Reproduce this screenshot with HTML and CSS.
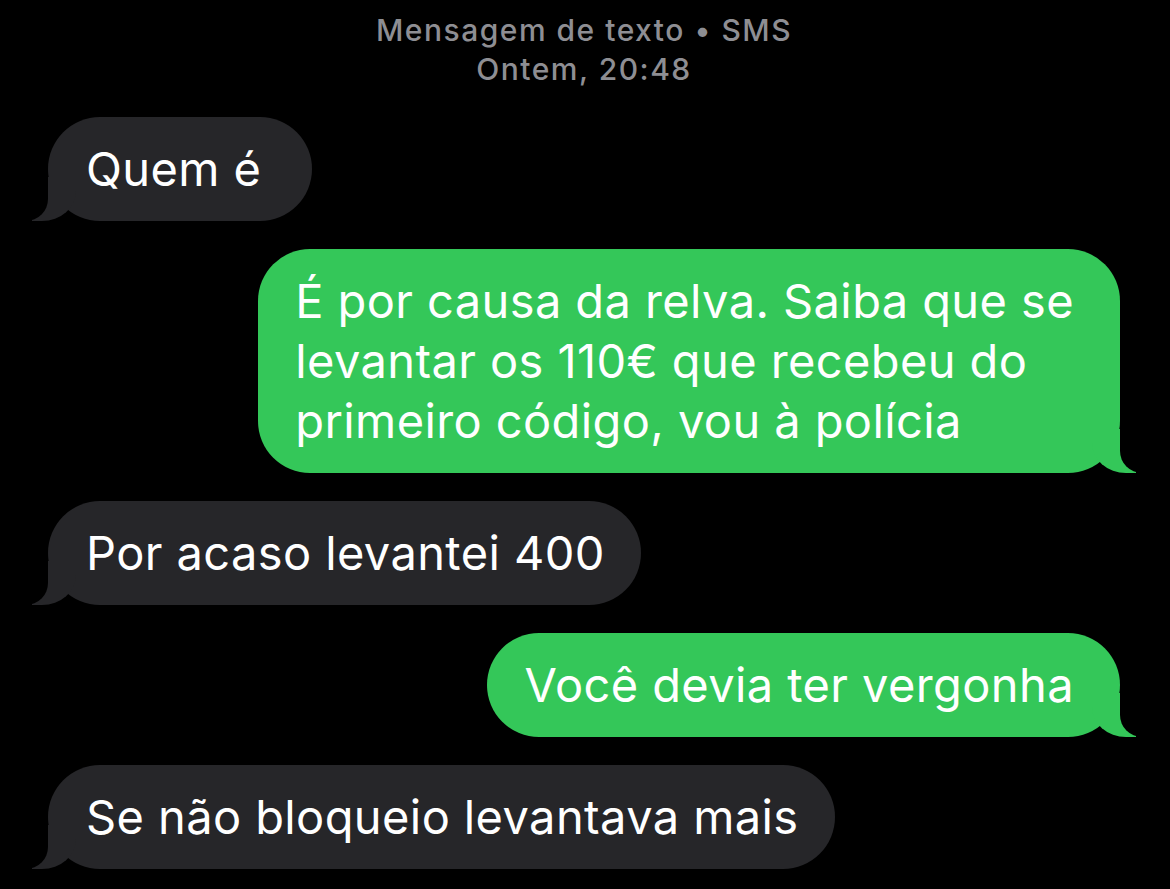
FILE: index.html
```
<!DOCTYPE html>
<html lang="pt">
<head>
  <meta charset="UTF-8">
  <title>Mensagens</title>
  <link rel="stylesheet" href="styles.css">
</head>
<body>

  <div class="thread">
    <div class="thread-head">
      <div>Mensagem de texto • SMS</div>
      <div>Ontem, 20:48</div>
    </div>

    <div class="msg received short">Quem é</div>
    <div class="msg sent">É por causa da relva. Saiba que se<br>levantar os 110€ que recebeu do<br>primeiro código, vou à polícia</div>
    <div class="msg received">Por acaso levantei 400</div>
    <div class="msg sent">Você devia ter vergonha</div>
    <div class="msg received">Se não bloqueio levantava mais</div>
  </div>

</body>
</html>
```

FILE: styles.css
```
body {
  margin: 0;
  background: #000;
  font-family: Inter, "Noto Sans", sans-serif;
  color: #fff;
}

.thread {
  display: flex;
  flex-direction: column;
  gap: 28px;
  padding: 11px 50px 20px 48px;
}

.thread-head {
  text-align: center;
  color: #8e8e93;
  font-size: 30px;
  font-weight: 500;
  letter-spacing: 1.5px;
  line-height: 39px;
}

.msg {
  position: relative;
  font-size: 47px;
  letter-spacing: 0.4px;
  line-height: 60px;
  border-radius: 52px;
  white-space: nowrap;
}

.msg::before,
.msg::after {
  content: "";
  position: absolute;
  bottom: 0;
}

/* grey bubble, tail on the left */
.received {
  align-self: flex-start;
  background: #262629;
  padding: 22px 36px 22px 38px;
}
.received.short {
  min-width: 190px;
}
.received::before {
  left: -16px;
  width: 44px;
  height: 44px;
  background: #262629;
  border-bottom-right-radius: 34px 30px;
}
.received::after {
  left: -56px;
  width: 56px;
  height: 48px;
  background: #000;
  border-bottom-right-radius: 22px;
}

/* green bubble, tail on the right */
.sent {
  align-self: flex-end;
  background: #34c759;
  padding: 22px 46px 22px 37px;
}
.sent::before {
  right: -16px;
  width: 44px;
  height: 44px;
  background: #34c759;
  border-bottom-left-radius: 34px 30px;
}
.sent::after {
  right: -56px;
  width: 56px;
  height: 48px;
  background: #000;
  border-bottom-left-radius: 22px;
}
```
